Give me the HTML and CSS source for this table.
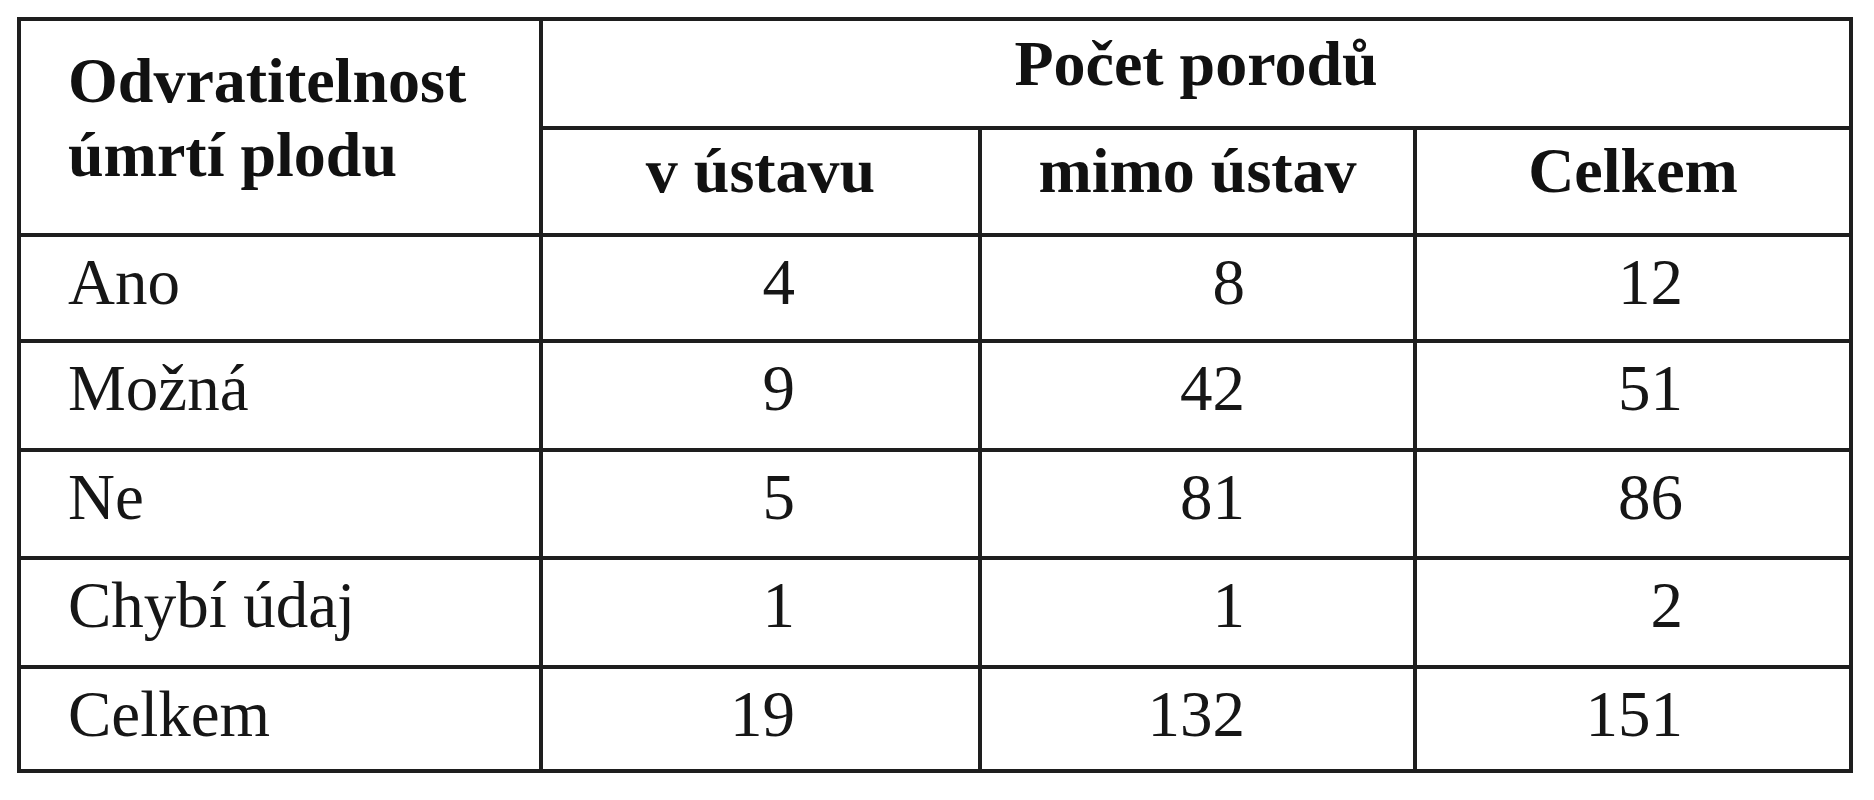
FILE: index.html
```html
<!DOCTYPE html>
<html lang="cs">
<head>
<meta charset="utf-8">
<title>Odvratitelnost úmrtí plodu</title>
<link rel="stylesheet" href="styles.css">
</head>
<body>
<div class="sheet">
  <div class="grid" role="table">
    <div class="cell head stub" role="columnheader">Odvratitelnost<br>úmrtí plodu</div>
    <div class="cell head group" role="columnheader">Počet porodů</div>
    <div class="cell head col" role="columnheader">v ústavu</div>
    <div class="cell head col" role="columnheader">mimo ústav</div>
    <div class="cell head col" role="columnheader">Celkem</div>

    <div class="cell label">Ano</div>
    <div class="cell num c2">4</div>
    <div class="cell num c3">8</div>
    <div class="cell num c4">12</div>

    <div class="cell label">Možná</div>
    <div class="cell num c2">9</div>
    <div class="cell num c3">42</div>
    <div class="cell num c4">51</div>

    <div class="cell label">Ne</div>
    <div class="cell num c2">5</div>
    <div class="cell num c3">81</div>
    <div class="cell num c4">86</div>

    <div class="cell label">Chybí údaj</div>
    <div class="cell num c2">1</div>
    <div class="cell num c3">1</div>
    <div class="cell num c4">2</div>

    <div class="cell label">Celkem</div>
    <div class="cell num c2">19</div>
    <div class="cell num c3">132</div>
    <div class="cell num c4">151</div>
  </div>
</div>
</body>
</html>
```
FILE: styles.css
```css
html, body {
  margin: 0;
  padding: 0;
  background: #ffffff;
}

.sheet {
  padding: 17px 0 0 17px;
}

.grid {
  display: grid;
  grid-template-columns: 518px 435px 431px 432px;
  grid-template-rows: 105px 103px 102px 105px 104px 105px 100px;
  gap: 4px;
  padding: 4px;
  width: max-content;
  background: #1e1e1e;
}

.cell {
  background: #ffffff;
  color: #161616;
  font-family: "Liberation Serif", "Times New Roman", serif;
  font-size: 65px;
  line-height: 74px;
  white-space: nowrap;
}

.head {
  font-weight: bold;
  font-size: 64px;
  color: #111111;
}

.stub {
  grid-row: span 2;
  padding: 23px 0 0 47px;
}

.group {
  grid-column: span 3;
  text-align: center;
  padding-top: 6px;
}

.col {
  text-align: center;
  padding-top: 4px;
}

.label {
  padding: 8px 0 0 47px;
}

.num {
  text-align: right;
  padding-top: 8px;
}

.c2 { padding-right: 183px; }
.c3 { padding-right: 168px; }
.c4 { padding-right: 166px; }
```
